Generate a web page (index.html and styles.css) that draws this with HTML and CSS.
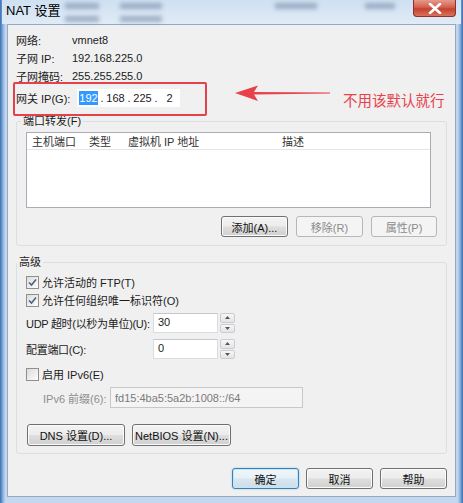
FILE: index.html
```html
<!DOCTYPE html>
<html lang="zh-CN">
<head>
  <meta charset="UTF-8">
  <title>NAT 设置</title>
  <link rel="stylesheet" href="styles.css">
</head>
<body>

  <div class="window">

    <!-- Title bar -->
    <div class="titlebar">
      <div class="ghosts">
        <span class="ghost g1"></span>
        <span class="ghost g2"></span>
        <span class="ghost g3"></span>
        <span class="ghost g4"></span>
        <span class="ghost g5"></span>
        <span class="ghost g6"></span>
      </div>
      <span class="title">NAT 设置</span>
      <div class="close">
        <svg width="14" height="11" viewBox="0 0 14 11">
          <path d="M2 1 L12 10 M12 1 L2 10" stroke="#fff" stroke-width="2.6" stroke-linecap="round"/>
        </svg>
      </div>
    </div>

    <!-- Client area -->
    <div class="client">

      <div class="info-row"><span class="lbl">网络:</span><span>vmnet8</span></div>
      <div class="info-row"><span class="lbl">子网 IP:</span><span>192.168.225.0</span></div>
      <div class="info-row"><span class="lbl">子网掩码:</span><span>255.255.255.0</span></div>
      <div class="info-row gw-row">
        <span class="lbl gw-lbl">网关 IP(G):</span>
        <div class="ipbox">
          <span class="seg"><span class="sel">192</span></span><span class="dot">.</span>
          <span class="seg">168</span><span class="dot">.</span>
          <span class="seg">225</span><span class="dot">.</span>
          <span class="seg">2</span>
        </div>
      </div>

      <!-- Port forwarding -->
      <div class="group group-ports">
        <span class="legend">端口转发(F)</span>
        <div class="listview">
          <div class="lv-head">
            <span class="col c1">主机端口</span>
            <span class="col c2">类型</span>
            <span class="col c3">虚拟机 IP 地址</span>
            <span class="col c4">描述</span>
          </div>
        </div>
        <div class="btn-row">
          <div class="btn w67">添加(A)...</div>
          <div class="btn w67 disabled">移除(R)</div>
          <div class="btn w66 disabled">属性(P)</div>
        </div>
      </div>

      <!-- Advanced -->
      <div class="group group-adv">
        <span class="legend legend-adv">高级</span>

        <div class="check-row first">
          <span class="cb checked">
            <svg width="11" height="11" viewBox="0 0 11 11"><path d="M2 5.5 L4.5 8 L9 2.5" fill="none" stroke="#4d6185" stroke-width="1.6"/></svg>
          </span>
          允许活动的 FTP(T)
        </div>
        <div class="check-row">
          <span class="cb checked">
            <svg width="11" height="11" viewBox="0 0 11 11"><path d="M2 5.5 L4.5 8 L9 2.5" fill="none" stroke="#4d6185" stroke-width="1.6"/></svg>
          </span>
          允许任何组织唯一标识符(O)
        </div>

        <div class="field-row udp">
          <span class="field-lbl">UDP 超时(以秒为单位)(U):</span>
          <div class="textbox num">30</div>
          <div class="spinner">
            <span class="spin"><svg width="5" height="3" viewBox="0 0 5 3"><path d="M0 3 L2.5 0 L5 3Z" fill="#556"/></svg></span>
            <span class="spin"><svg width="5" height="3" viewBox="0 0 5 3"><path d="M0 0 L2.5 3 L5 0Z" fill="#556"/></svg></span>
          </div>
        </div>
        <div class="field-row port">
          <span class="field-lbl">配置端口(C):</span>
          <div class="textbox num">0</div>
          <div class="spinner">
            <span class="spin"><svg width="5" height="3" viewBox="0 0 5 3"><path d="M0 3 L2.5 0 L5 3Z" fill="#556"/></svg></span>
            <span class="spin"><svg width="5" height="3" viewBox="0 0 5 3"><path d="M0 0 L2.5 3 L5 0Z" fill="#556"/></svg></span>
          </div>
        </div>

        <div class="check-row ipv6">
          <span class="cb"></span>
          启用 IPv6(E)
        </div>
        <div class="field-row prefix">
          <span class="prefix-lbl">IPv6 前缀(6):</span>
          <div class="textbox disabled-box">fd15:4ba5:5a2b:1008::/64</div>
        </div>

        <div class="btn-row left">
          <div class="btn w98">DNS 设置(D)...</div>
          <div class="btn w99">NetBIOS 设置(N)...</div>
        </div>
      </div>

      <!-- Dialog buttons -->
      <div class="dialog-btns">
        <div class="btn w67 default">确定</div>
        <div class="btn w67">取消</div>
        <div class="btn w67">帮助</div>
      </div>
    </div>

    <!-- Annotation drawn on top of the screenshot -->
    <div class="mark-box"></div>
    <svg class="mark-arrow" width="110" height="30" viewBox="0 0 110 30">
      <path d="M5 13 L28 5.5 L24 12 L100 12.6 L100 13.6 L24 14.6 L28 21Z" fill="#e8414a"/>
    </svg>
    <span class="mark-text">不用该默认就行</span>
  </div>

</body>
</html>
```

FILE: styles.css
```css
/* Reset & base */
* {
  margin: 0;
  padding: 0;
  box-sizing: border-box;
}

body {
  font-family: "Liberation Sans", "Noto Sans CJK SC", sans-serif;
  font-size: 11px;
  color: #1b1b1b;
  background: #fff;
}

/* Window frame */
.window {
  position: relative;
  width: 463px;
  height: 503px;
  display: flex;
  flex-direction: column;
  overflow: hidden;
  background: linear-gradient(to right, #3a6eb0 0, #6d9bd1 2px, #a8c5e6 4px, #c4d9ef 6px, #c4d9ef 457px, #a8c5e6 459px, #6d9bd1 461px, #3a6eb0 463px);
}

.titlebar {
  position: relative;
  height: 24px;
  margin: 0 2px;
  padding: 0 5px 0 4px;
  display: flex;
  justify-content: space-between;
  align-items: flex-start;
  background: linear-gradient(#cfe0f2, #e0ebf6);
}

.ghosts {
  position: absolute;
  inset: 0;
}

.ghost {
  position: absolute;
  height: 6px;
  background: rgba(70, 95, 130, 0.4);
  filter: blur(2px);
}

.g1 { left: 63px; top: 3px; width: 34px; }
.g2 { left: 118px; top: 3px; width: 42px; }
.g3 { left: 273px; top: 3px; width: 42px; }
.g4 { left: 363px; top: 3px; width: 30px; }
.g5 { left: 63px; top: 16px; width: 34px; }
.g6 { left: 118px; top: 16px; width: 42px; }

.title {
  position: relative;
  font-size: 13px;
  line-height: 22px;
  color: #000;
}

.close {
  position: relative;
  width: 43px;
  height: 17px;
  display: flex;
  align-items: center;
  justify-content: center;
  border: 1px solid #8b3329;
  border-top: none;
  border-radius: 0 0 4px 4px;
  background: linear-gradient(#e6998c 0, #d5604f 45%, #c5412f 55%, #d9705d 100%);
}

/* Client */
.client {
  flex: 1;
  margin: 0 7px 6px;
  padding: 6px 8px 0 8px;
  background: #f0f0f0;
  border: 1px solid #93a9c3;
  display: flex;
  flex-direction: column;
}

.info-row {
  display: flex;
  align-items: center;
  height: 18px;
}

.lbl {
  width: 56px;
}

.gw-row {
  margin-top: 3px;
  height: 19px;
}

.gw-lbl {
  width: 61px;
}

.ipbox {
  width: 103px;
  height: 18px;
  padding-left: 2px;
  display: flex;
  align-items: center;
  background: #fff;
}

.seg {
  width: 19px;
  text-align: center;
}

.dot {
  width: 8px;
  text-align: center;
}

.sel {
  background: #3399ff;
  color: #fff;
  padding: 1px 0;
}

/* Group boxes */
.group {
  display: flex;
  flex-direction: column;
  border: 1px solid #d8dfe5;
  border-radius: 3px;
}

.group-ports {
  margin-top: 14px;
  padding-bottom: 8px;
}

.group-adv {
  margin-top: 16px;
  padding-bottom: 7px;
}

.legend {
  align-self: flex-start;
  margin: -8px 0 0 4px;
  padding: 0 2px;
  line-height: 14px;
  background: #f0f0f0;
}

.legend-adv {
  margin-left: 0;
}

/* List view */
.listview {
  width: 405px;
  height: 76px;
  margin: 4px 0 0 9px;
  background: #fff;
  border: 1px solid #a9adb3;
}

.lv-head {
  display: flex;
  height: 17px;
  align-items: center;
  border-bottom: 1px solid #e5e5e5;
  color: #333;
}

.col.c1 { width: 62px; padding-left: 5px; }
.col.c2 { width: 39px; }
.col.c3 { width: 154px; }

/* Buttons */
.btn-row {
  display: flex;
  justify-content: flex-end;
  gap: 8px;
  margin-top: 8px;
  padding-right: 9px;
}

.btn-row.left {
  justify-content: flex-start;
  gap: 7px;
  margin-top: 16px;
  padding: 0 0 0 10px;
}

.btn {
  height: 21px;
  display: flex;
  align-items: center;
  justify-content: center;
  border: 1px solid #707070;
  border-radius: 3px;
  background: linear-gradient(#f3f3f3 0, #ececec 48%, #dedede 52%, #d0d0d0 100%);
  box-shadow: inset 0 0 0 1px #fbfbfb;
  color: #111;
}

.btn-row.left .btn {
  height: 22px;
}

.btn.disabled {
  border-color: #b5b8bb;
  background: #f4f4f4;
  box-shadow: none;
  color: #8a8a8a;
}

.btn.default {
  border-color: #3c7fb1;
  box-shadow: inset 0 0 0 1px #c4e6f9, 0 0 2px #8fc7ea;
  background: linear-gradient(#f1f7fb 0, #e6f0f7 48%, #d8e6ef 52%, #cfdde7 100%);
}

.w66 { width: 66px; }
.w67 { width: 67px; }
.w98 { width: 98px; }
.w99 { width: 99px; }

/* Check boxes */
.check-row {
  display: flex;
  align-items: center;
  height: 18px;
  margin-left: 9px;
}

.check-row.first {
  margin-top: 4px;
}

.check-row.ipv6 {
  margin-top: 6px;
}

.cb {
  width: 13px;
  height: 13px;
  margin-right: 3px;
  display: flex;
  align-items: center;
  justify-content: center;
  border: 1px solid #8e8f8f;
  background: linear-gradient(135deg, #dcdcdc, #fdfdfd);
}

/* Text fields */
.field-row {
  display: flex;
  align-items: center;
  margin-left: 9px;
}

.field-row.udp {
  margin-top: 4px;
  height: 20px;
}

.field-row.port {
  margin-top: 6px;
  height: 20px;
}

.field-row.prefix {
  margin: 4px 0 0 26px;
  height: 21px;
}

.field-lbl {
  width: 127px;
  flex-shrink: 0;
  white-space: nowrap;
  letter-spacing: -0.3px;
}

.prefix-lbl {
  width: 67px;
  color: #8d8d8d;
}

.textbox {
  height: 100%;
  display: flex;
  align-items: center;
  padding: 0 4px;
  background: #fff;
  border: 1px solid #d9dde2;
  border-top-color: #c3c8ce;
}

.textbox.num {
  width: 65px;
  padding-bottom: 3px;
}

.disabled-box {
  width: 193px;
  background: #f4f4f4;
  border-color: #c8c8c8;
  color: #7b7b7b;
}

.spinner {
  height: 100%;
  margin-left: 2px;
  display: flex;
  flex-direction: column;
  gap: 1px;
}

.spin {
  flex: 1;
  width: 15px;
  display: flex;
  align-items: center;
  justify-content: center;
  border: 1px solid #c9cdd2;
  border-radius: 2px;
  background: linear-gradient(#f7f7f7, #e4e4e4);
}

/* Dialog buttons */
.dialog-btns {
  display: flex;
  justify-content: flex-end;
  gap: 7px;
  margin-top: 14px;
}

/* Annotation */
.mark-box {
  position: absolute;
  left: 13px;
  top: 82px;
  width: 194px;
  height: 34px;
  border: 2px solid #e4424b;
  border-radius: 2px;
}

.mark-arrow {
  position: absolute;
  left: 230px;
  top: 80px;
}

.mark-text {
  position: absolute;
  left: 343px;
  top: 90px;
  font-family: "Noto Sans CJK SC", sans-serif;
  font-size: 14.5px;
  line-height: 20px;
  color: #e8414a;
}
```
